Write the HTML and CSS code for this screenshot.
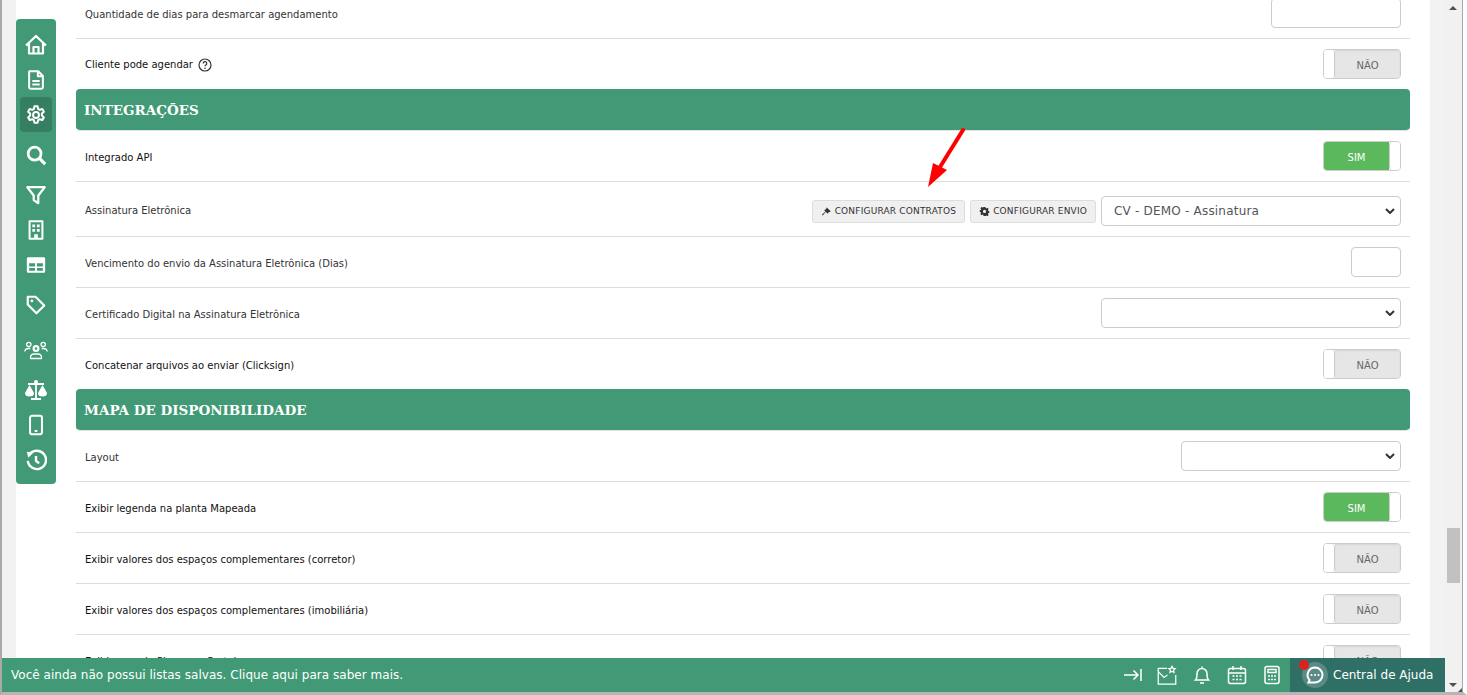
FILE: index.html
```html
<!DOCTYPE html>
<html lang="pt-BR">
<head>
  <meta charset="UTF-8">
  <title>Configurações</title>
  <link rel="stylesheet" href="styles.css">
</head>
<body>
  <div class="window">
    <div class="page">
      <div class="content">
        <div class="row">
          <span>Quantidade de dias para desmarcar agendamento</span>
          <div class="text-input wide"></div>
        </div>
        <div class="row last">
          <span class="label-help dark">Cliente pode agendar
            <svg class="help" viewBox="0 0 14 14"><circle cx="7" cy="7" r="6" fill="none" stroke="#333" stroke-width="1.2"/><path d="M5.2 5.5a1.8 1.8 0 1 1 2.7 1.5c-.6.4-.9.7-.9 1.3" fill="none" stroke="#333" stroke-width="1.2"/><circle cx="7" cy="10.2" r=".8" fill="#333"/></svg>
          </span>
          <div class="toggle off"><i></i><b>NÃO</b></div>
        </div>
        <h2 class="section">INTEGRAÇÕES</h2>
        <div class="row">
          <span class="dark">Integrado API</span>
          <div class="toggle on"><b>SIM</b><i></i></div>
        </div>
        <div class="row tall">
          <span>Assinatura Eletrônica</span>
          <div class="controls">
            <button class="btn">
              <svg viewBox="0 0 12 12"><path d="M6.2 1.500 10.600 5.800 9.500 6.900 8.900 6.400 7.900 7.300 7.900 8 6.900 8.100 5.200 6.400 1.900 10.400 1 9.600 4.700 5.900 3.600 4.700 4.400 3.800 5.100 3.700 6 2.700 5.600 2.200Z" fill="#333"/></svg>
              CONFIGURAR CONTRATOS
            </button>
            <button class="btn">
              <svg viewBox="0 0 12 12"><path fill="#333" fill-rule="evenodd" d="M5 1h2l.3 1.300.9.4 1.200-.7 1.100 1.300-.8 1.100.3.9 1.200.4v1.800l-1.200.3-.3.9.8 1.100-1.200 1.300-1.100-.7-.9.4L7 11H5l-.3-1.200-.9-.4-1.100.7L1.500 8.800l.8-1.100-.3-.9L.8 6.500V4.700l1.200-.3.3-.9-.8-1.100L2.700 1l1.100.7.9-.4ZM6 4.200a1.700 1.700 0 1 0 0 3.400 1.700 1.700 0 0 0 0-3.400Z"/></svg>
              CONFIGURAR ENVIO
            </button>
            <div class="select wide">CV - DEMO - Assinatura<svg class="caret" viewBox="0 0 10 6"><path d="M1 1l4 4 4-4" fill="none" stroke="#333" stroke-width="2"/></svg></div>
          </div>
        </div>
        <div class="row">
          <span>Vencimento do envio da Assinatura Eletrônica (Dias)</span>
          <div class="text-input small"></div>
        </div>
        <div class="row">
          <span>Certificado Digital na Assinatura Eletrônica</span>
          <div class="select wide"><svg class="caret" viewBox="0 0 10 6"><path d="M1 1l4 4 4-4" fill="none" stroke="#333" stroke-width="2"/></svg></div>
        </div>
        <div class="row last">
          <span class="dark">Concatenar arquivos ao enviar (Clicksign)</span>
          <div class="toggle off"><i></i><b>NÃO</b></div>
        </div>
        <h2 class="section">MAPA DE DISPONIBILIDADE</h2>
        <div class="row">
          <span>Layout</span>
          <div class="select mid"><svg class="caret" viewBox="0 0 10 6"><path d="M1 1l4 4 4-4" fill="none" stroke="#333" stroke-width="2"/></svg></div>
        </div>
        <div class="row">
          <span class="dark">Exibir legenda na planta Mapeada</span>
          <div class="toggle on"><b>SIM</b><i></i></div>
        </div>
        <div class="row">
          <span class="dark">Exibir valores dos espaços complementares (corretor)</span>
          <div class="toggle off"><i></i><b>NÃO</b></div>
        </div>
        <div class="row">
          <span class="dark">Exibir valores dos espaços complementares (imobiliária)</span>
          <div class="toggle off"><i></i><b>NÃO</b></div>
        </div>
        <div class="row">
          <span class="dark">Exibir agenda Plugar no Portal</span>
          <div class="toggle off"><i></i><b>NÃO</b></div>
        </div>
      </div>
    </div>
    <div class="scrollbar">
      <span class="arrow up"></span>
      <span class="thumb"></span>
      <span class="arrow down"></span>
      <span class="grip"></span>
    </div>

    <nav class="sidebar">
      <a><svg class="wide-icon" viewBox="0 0 24 24"><path d="M2 12.500 12 3l10 9.500M5 10v10.500h14V10M9.500 20.500V14h5v6.500"/></svg></a>
      <a><svg viewBox="0 0 24 24"><path d="M5 2.500h9.500L19.500 7.500V20a1.500 1.500 0 0 1-1.500 1.500H6A1.500 1.500 0 0 1 4.500 20V3ZM14 3v5h5M8 13h8M8 17h8"/></svg></a>
      <a class="active"><svg viewBox="0 0 24 24"><circle cx="12" cy="12" r="3.200"/><path d="M10.300 2.500h3.400l.6 2.900 1.800 1 2.800-.9 1.700 2.900-2.200 2v2.200l2.200 2-1.700 2.900-2.800-.9-1.800 1-.6 2.900h-3.400l-.6-2.900-1.800-1-2.800.9-1.700-2.900 2.200-2v-2.200l-2.200-2 1.700-2.900 2.800.9 1.800-1Z"/></svg></a>
      <a class="gap"><svg viewBox="0 0 24 24"><circle cx="10.500" cy="10.500" r="7" stroke-width="3"/><path d="M15.500 15.500 22 22" stroke-width="3.400"/></svg></a>
      <a class="gap"><svg viewBox="0 0 24 24"><path d="M2.500 3.500h19L14.500 12.500V21L9.500 17.500V12.500Z" stroke-width="2.400"/></svg></a>
      <a><svg viewBox="0 0 24 24"><path d="M5 2.500h14v19H5Z"/><path class="solid" d="M8 6h3v3H8ZM13 6h3v3h-3ZM8 11h3v3H8ZM13 11h3v3h-3ZM10 16.500h4v5h-4Z"/></svg></a>
      <a><svg viewBox="0 0 24 24"><path class="solid" fill-rule="evenodd" d="M3.500 3.500h17A1.500 1.500 0 0 1 22 5v14a1.500 1.500 0 0 1-1.500 1.500h-17A1.500 1.500 0 0 1 2 19V5A1.500 1.500 0 0 1 3.500 3.500ZM4.500 10v3.500h6.500V10ZM13 10v3.500h6.500V10ZM4.500 15.200v3h6.500v-3ZM13 15.200v3h6.500v-3Z"/></svg></a>
      <a class="gap"><svg viewBox="0 0 24 24"><path d="M3 3h8.500L21 12.500 12.500 21 3 11.500Z" stroke-width="2.400"/><circle class="solid" cx="7.500" cy="7.500" r="1.500"/></svg></a>
      <a class="gap-wide"><svg class="wide-icon" viewBox="0 0 24 24"><circle cx="12" cy="10.500" r="2.400"/><path d="M6.500 20.500v-1.500a3.500 3.500 0 0 1 3.500-3h4a3.500 3.500 0 0 1 3.500 3v1.500ZM7 6.500a2.200 2.200 0 1 1-4.400 0 2.200 2.200 0 0 1 4.400 0ZM21.400 6.500a2.200 2.200 0 1 1-4.400 0 2.200 2.200 0 0 1 4.400 0ZM.8 13.500a3.500 3.500 0 0 1 3.500-3h2M23.200 13.500a3.500 3.500 0 0 0-3.500-3h-2" stroke-width="1.300"/></svg></a>
      <a class="gap"><svg class="wide-icon" viewBox="0 0 24 24"><path d="M12 3v17M7 21h10M4 6h16" stroke-width="1.800"/><path class="solid" d="M5.500 7 1 15a4.500 3.500 0 0 0 9 0ZM18.500 7 14 15a4.500 3.500 0 0 0 9 0Z"/><circle class="solid" cx="12" cy="4" r="2"/></svg></a>
      <a><svg viewBox="0 0 24 24"><rect x="5.500" y="2" width="13" height="20" rx="2"/><path d="M10.500 18.500h3"/></svg></a>
      <a><svg viewBox="0 0 24 24"><path d="M4.500 6.500A10 10 0 1 1 3 13" stroke-width="2.600"/><path class="solid" d="M2 3l7 1-5.500 5.500Z"/><path d="M12 7.500V13l3.500 2.500" stroke-width="2.600"/></svg></a>
    </nav>

    <svg class="annotation" viewBox="0 0 40 60">
      <path d="M38 2 15 39" stroke="#f00" stroke-width="4" stroke-linecap="round" fill="none"/>
      <path d="M3 59 8 35 22 42Z" fill="#f00"/>
    </svg>

    <footer class="footer">
      <span class="notice">Você ainda não possui listas salvas. Clique aqui para saber mais.</span>
      <div class="tools">
        <svg viewBox="0 0 20 20"><path d="M2 10h14M11.500 5.500 16 10l-4.500 4.500M19 4v12"/></svg>
        <svg viewBox="0 0 24 24"><path d="M12 4H1.500v19h21V12M1.500 8l7 7 4-3"/><path class="solid" fill-rule="evenodd" d="m18 0 1.700 3.300 3.800.5-2.800 2.600.7 3.700L18 8.400l-3.400 1.700.7-3.700-2.800-2.600 3.800-.5Zm0 3.500-.7 1.400-1.500.2 1.100 1-.3 1.500 1.400-.7 1.400.7-.3-1.500 1.100-1-1.500-.2Z"/></svg>
        <svg viewBox="0 0 20 20"><path d="M3.500 15c1.500-1.500 1.500-3 1.500-6.500a5 5 0 0 1 10 0c0 3.500 0 5 1.500 6.500ZM8 18h4M10 1.500V3"/></svg>
        <svg viewBox="0 0 20 20"><rect x="1.500" y="3.500" width="17" height="15" rx="2"/><path d="M1.500 8h17M6 1v4M14 1v4M5.500 11h2M9 11h2M12.500 11h2M5.500 14.500h2M9 14.500h2M12.500 14.500h2"/></svg>
        <svg viewBox="0 0 20 20"><rect x="3" y="1.500" width="14" height="17" rx="2"/><path d="M6 4.500h8v3H6ZM6 11h2M9 11h2M12 11h2M6 14.500h2M9 14.500h2M12 14.500h2"/></svg>
      </div>
      <div class="help-center">
        <span class="dot"></span>
        <span class="chat"><svg viewBox="0 0 20 20"><path d="M10 2.500a7.500 7.500 0 0 1 0 15H3.500l1-2.500A7.500 7.500 0 0 1 10 2.500Z" fill="none" stroke="#fff" stroke-width="2"/><circle cx="6.500" cy="10" r="1.100" fill="#fff"/><circle cx="10" cy="10" r="1.100" fill="#fff"/><circle cx="13.500" cy="10" r="1.100" fill="#fff"/></svg></span>
        Central de Ajuda
      </div>
    </footer>
  </div>
</body>
</html>
```

FILE: styles.css
```css
* {
  margin: 0;
  padding: 0;
  box-sizing: border-box;
}

html, body {
  height: 100%;
  overflow: hidden;
}

body {
  font-family: "DejaVu Sans", sans-serif;
  font-size: 10px;
  color: #333;
  background: #fff;
}

.window {
  position: relative;
  display: flex;
  height: 695px;
  border-left: 2px solid #a9a9a9;
  border-right: 4px solid #fff;
  border-bottom: 3px solid #b5b5b5;
  background: #f2f2f2;
}

.page {
  flex: 1;
  padding: 0 15px 0 14px;
  overflow: hidden;
}

.content {
  height: 100%;
  background: #fff;
  padding: 0 20px 0 60px;
}

.content > :first-child {
  margin-top: -12px;
}

.row {
  display: flex;
  justify-content: space-between;
  align-items: center;
  height: 51px;
  padding: 0 9px;
  border-bottom: 1px solid #ddd;
}

.row > span {
  padding-top: 3px;
}

.row > span.label-help {
  padding-top: 1px;
}

.row.tall {
  height: 55px;
}

.row.last {
  height: 50px;
  border-bottom: 0;
}

.dark {
  color: #111;
}

.label-help {
  display: flex;
  align-items: center;
  gap: 5px;
}

.help {
  width: 14px;
  height: 14px;
}

.section {
  height: 42px;
  line-height: 43px;
  padding-left: 8px;
  border-bottom: 1px solid #e3e3e3;
  border-radius: 4px;
  background: #419a75;
  background-clip: padding-box;
  color: #fff;
  font-family: "DejaVu Serif", serif;
  font-size: 13.5px;
  font-weight: bold;
}

.text-input, .select {
  height: 30px;
  border: 1px solid #ccc;
  border-radius: 4px;
  background: #fff;
}

.text-input.wide {
  width: 130px;
}

.text-input.small {
  width: 50px;
}

.select {
  display: flex;
  justify-content: space-between;
  align-items: center;
  padding: 0 5px 0 12px;
  color: #555;
  font-size: 12px;
  letter-spacing: .2px;
}

.select.wide {
  width: 300px;
}

.select.mid {
  width: 220px;
}

.caret {
  width: 10px;
  height: 6px;
  margin-left: auto;
}

.controls {
  display: flex;
  align-items: center;
  gap: 5px;
  margin-top: 4px;
}

.btn {
  display: flex;
  align-items: center;
  gap: 3px;
  height: 23px;
  padding: 0 8px;
  border: 1px solid #ddd;
  border-radius: 3px;
  background: #f0f0f0;
  color: #333;
  font-family: inherit;
  font-size: 9px;
  letter-spacing: .18px;
}

.btn svg {
  width: 11px;
  height: 11px;
}

.toggle {
  display: flex;
  width: 78px;
  height: 30px;
  border: 1px solid #ccc;
  border-radius: 4px;
  overflow: hidden;
  background: #fff;
}

.toggle i {
  width: 11px;
  background: #fff;
}

.toggle.off i {
  border-right: 1px solid #ccc;
  border-radius: 0 3px 3px 0;
}

.toggle.on i {
  border-left: 1px solid #ccc;
  border-radius: 3px 0 0 3px;
}

.toggle b {
  flex: 1;
  padding-top: 2px;
  font-weight: normal;
  font-size: 10px;
  line-height: 28px;
  text-align: center;
}

.toggle.off b {
  background: #e6e6e6;
  color: #666;
  box-shadow: inset 0 1px 2px rgba(0, 0, 0, .08);
}

.toggle.on b {
  background: #5cb85c;
  color: #fff;
}

.scrollbar {
  position: relative;
  flex: 0 0 18px;
  background: #f1f1f1;
  border-right: 1px solid #a9a9a9;
}

.arrow {
  position: absolute;
  left: 4px;
  border-left: 4px solid transparent;
  border-right: 4px solid transparent;
}

.arrow.up {
  top: 6px;
  border-bottom: 4px solid #505050;
}

.arrow.down {
  bottom: 5px;
  border-top: 4px solid #505050;
}

.thumb {
  position: absolute;
  top: 528px;
  left: 2px;
  width: 13px;
  height: 55px;
  background: #c1c1c1;
}

.grip {
  position: absolute;
  right: 0;
  bottom: 0;
  border-left: 4px solid transparent;
  border-bottom: 4px solid #505050;
}

.sidebar {
  position: absolute;
  top: 19px;
  left: 14px;
  display: flex;
  flex-direction: column;
  align-items: center;
  width: 40px;
  height: 465px;
  padding-top: 8px;
  border-radius: 4px;
  background: #419a75;
}

.sidebar a {
  display: flex;
  justify-content: center;
  align-items: center;
  width: 32px;
  height: 35px;
  flex: none;
  border-radius: 4px;
}

.sidebar a.gap {
  margin-top: 5px;
}

.sidebar a.gap-wide {
  margin-top: 10px;
}

.sidebar a.active {
  background: #357e61;
}

.sidebar svg {
  width: 22px;
  height: 22px;
  fill: none;
  stroke: #fff;
  stroke-width: 2.200;
  stroke-linejoin: round;
}

.sidebar svg.wide-icon {
  width: 24px;
  height: 24px;
}

.sidebar .solid, .tools .solid {
  fill: #fff;
  stroke: none;
}

.annotation {
  position: absolute;
  top: 128px;
  left: 923px;
  width: 40px;
  height: 60px;
}

.footer {
  position: absolute;
  left: 0;
  right: 18px;
  bottom: 0;
  display: flex;
  align-items: center;
  height: 34px;
  background: #419a75;
  color: #fff;
}

.notice {
  flex: 1;
  padding-left: 9px;
  font-size: 12px;
  letter-spacing: .03px;
}

.tools {
  display: flex;
  align-items: center;
  gap: 15px;
  padding-right: 8px;
}

.tools svg {
  width: 20px;
  height: 20px;
  fill: none;
  stroke: #fff;
  stroke-width: 1.500;
}

.help-center {
  position: relative;
  display: flex;
  align-items: center;
  gap: 5px;
  width: 155px;
  height: 100%;
  padding-left: 12px;
  background: #2f6f66;
  font-size: 12px;
}

.chat {
  display: flex;
  justify-content: center;
  align-items: center;
  width: 26px;
  height: 26px;
  border-radius: 50%;
  background: rgba(255, 255, 255, .2);
}

.chat svg {
  width: 20px;
  height: 20px;
}

.dot {
  position: absolute;
  top: 2px;
  left: 9px;
  width: 10px;
  height: 10px;
  border-radius: 50%;
  background: #e02020;
}
```
